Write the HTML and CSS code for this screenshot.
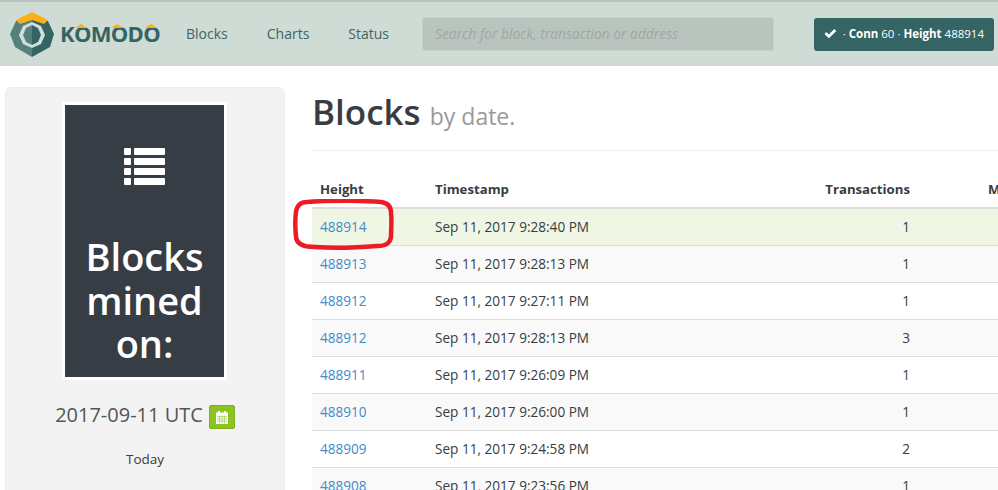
FILE: index.html

```html
<!DOCTYPE html>
<html lang="en">
<head>
  <meta charset="UTF-8">
  <title>Blocks by date - Komodo explorer</title>
  <meta name="viewport" content="width=device-width, initial-scale=1.0">
  <link rel="stylesheet" href="styles.css">
</head>
<body>
  <nav class="navbar">
    <a class="brand">
      <svg class="brand-mark" width="44" height="45" viewBox="0 0 44 45">
        <polygon points="6,9 0,22 5,35 22,45 22,8" fill="#56807e"/>
        <polygon points="38,9 44,22 40,35 22,45 22,8" fill="#346464"/>
        <polygon points="22,10 31,14 35,23 31,32 22,36 13,32 9,23 13,14" fill="#d3e0da"/>
        <polygon points="22,13 16,16 13,23 16,30 22,33" fill="#56807e"/>
        <polygon points="22,13 28,16 31,23 28,30 22,33" fill="#346464"/>
        <polygon points="6,8 22,0 38,8 34,12 22,8 10,12" fill="#fbb017"/>
      </svg>
      <span class="brand-word">
        <span class="brand-text">KOMODO</span>
        <svg class="brand-caps" width="100" height="6" viewBox="0 0 100 6">
          <polygon points="15,5 21,1 27,5" fill="#fbb017"/>
          <polygon points="51,5 57,1 63,5" fill="#fbb017"/>
          <polygon points="85,5 91,1 97,5" fill="#fbb017"/>
        </svg>
      </span>
    </a>
    <ul class="nav-links">
      <li>Blocks</li>
      <li>Charts</li>
      <li>Status</li>
    </ul>
    <input class="search" type="text" placeholder="Search for block, transaction or address">
    <div class="status">
      <svg width="13" height="11" viewBox="0 0 13 11"><path d="M0.500 6 L2.500 4 L5 6.500 L10.500 0.800 L12.700 3 L5 10.500 Z" fill="#fff"/></svg>
      <span>· <b>Conn</b> 60 · <b>Height</b> 488914</span>
    </div>
  </nav>

  <div class="page">
    <aside class="sidebar">
      <div class="poster">
        <svg class="poster-icon" width="41" height="37" viewBox="0 0 41 37" fill="#fff">
          <rect x="0" y="0" width="7" height="7" rx="1"/><rect x="10" y="0" width="31" height="7" rx="1"/>
          <rect x="0" y="10" width="7" height="7" rx="1"/><rect x="10" y="10" width="31" height="7" rx="1"/>
          <rect x="0" y="20" width="7" height="7" rx="1"/><rect x="10" y="20" width="31" height="7" rx="1"/>
          <rect x="0" y="30" width="7" height="7" rx="1"/><rect x="10" y="30" width="31" height="7" rx="1"/>
        </svg>
        <div class="poster-title">Blocks mined on:</div>
      </div>
      <div class="date-line">
        <span class="date-text">2017-09-11 UTC</span>
        <span class="date-btn">
          <svg width="12" height="13" viewBox="0 0 12 13">
            <rect x="0" y="1.500" width="12" height="11.500" fill="#fff"/>
            <rect x="2" y="0" width="2" height="3" fill="#fff"/><rect x="8" y="0" width="2" height="3" fill="#fff"/>
            <path d="M1 5.500h10M1 7.800h10M1 10.100h10M3.500 4.500v8M6 4.500v8M8.500 4.500v8" stroke="#a9cf6c" stroke-width="0.800"/>
          </svg>
        </span>
      </div>
      <div class="today">Today</div>
    </aside>

    <main class="content">
      <header class="page-header">
        <h1>Blocks <small>by date.</small></h1>
      </header>
      <div class="table-wrap">
        <svg class="annotation" width="102" height="52" viewBox="0 0 102 52">
          <path d="M14 3 C40 1 75 2 88 3 C96 4 98 9 98 14 C99 22 98 32 98 38 C97 45 92 47 84 47 C60 49 35 49 22 48 C10 48 3 45 3 37 C2 28 2 20 3 13 C4 6 8 3 14 3 Z" fill="none" stroke="#ed1c24" stroke-width="4.500"/>
        </svg>
        <table class="blocks">
          <thead>
            <tr><th class="col-height">Height</th><th class="col-time">Timestamp</th><th class="col-tx">Transactions</th><th class="col-mined">Mined by</th></tr>
          </thead>
          <tbody>
            <tr class="latest"><td><a>488914</a></td><td>Sep 11, 2017 9:28:40 PM</td><td class="num">1</td><td></td></tr>
            <tr><td><a>488913</a></td><td>Sep 11, 2017 9:28:13 PM</td><td class="num">1</td><td></td></tr>
            <tr><td><a>488912</a></td><td>Sep 11, 2017 9:27:11 PM</td><td class="num">1</td><td></td></tr>
            <tr><td><a>488912</a></td><td>Sep 11, 2017 9:28:13 PM</td><td class="num">3</td><td></td></tr>
            <tr><td><a>488911</a></td><td>Sep 11, 2017 9:26:09 PM</td><td class="num">1</td><td></td></tr>
            <tr><td><a>488910</a></td><td>Sep 11, 2017 9:26:00 PM</td><td class="num">1</td><td></td></tr>
            <tr><td><a>488909</a></td><td>Sep 11, 2017 9:24:58 PM</td><td class="num">2</td><td></td></tr>
            <tr><td><a>488908</a></td><td>Sep 11, 2017 9:23:56 PM</td><td class="num">1</td><td></td></tr>
          </tbody>
        </table>
      </div>
    </main>
  </div>
</body>
</html>
```

FILE: styles.css

```css
html, body {
  height: 100%;
  overflow: hidden;
}
body {
  margin: 0;
  font-family: "Open Sans", "Noto Sans", sans-serif;
  font-size: 14px;
  color: #373d42;
  background: #fff;
}

/* top bar */
.navbar {
  display: flex;
  align-items: center;
  box-sizing: border-box;
  height: 66px;
  padding-left: 10px;
  background: #cedcd5;
  border-top: 2px solid #b9c4be;
}
.brand {
  display: flex;
  align-items: center;
  flex: none;
  gap: 6px;
  width: 150px;
}
.brand-word {
  position: relative;
  display: block;
  margin-bottom: 2px;
}
.brand-text {
  font-size: 22px;
  font-weight: 700;
  letter-spacing: -0.7px;
  color: #346464;
}
.brand-caps {
  position: absolute;
  left: 0;
  top: 5px;
}
.nav-links {
  display: flex;
  flex: none;
  gap: 39px;
  list-style: none;
  margin: 0 0 2px 26px;
  padding: 0;
  color: #3e6464;
  font-size: 14px;
}
.search {
  box-sizing: border-box;
  flex: none;
  width: 352px;
  height: 34px;
  margin-left: 33px;
  padding: 0 12px 2px;
  background: #b9c4be;
  border: 1px solid #c5d2cb;
  border-radius: 3px;
  font-family: inherit;
  font-size: 13.800px;
  font-style: italic;
}
.search::placeholder {
  color: #9fa8a3;
}
.status {
  display: flex;
  align-items: center;
  flex: none;
  gap: 6px;
  box-sizing: border-box;
  width: 180px;
  height: 33px;
  margin-left: 40px;
  padding: 0 10px 1px;
  background: #346464;
  border-radius: 3px;
  color: #fff;
  font-size: 11.500px;
  white-space: nowrap;
}

/* page */
.page {
  display: flex;
  align-items: flex-start;
  padding: 21px 0 0 5px;
}
.sidebar {
  box-sizing: border-box;
  flex: none;
  width: 280px;
  height: 420px;
  padding-top: 14px;
  background: #f3f3f3;
  border: 1px solid #eee;
  border-radius: 6px;
  text-align: center;
}
.poster {
  box-sizing: border-box;
  width: 165px;
  height: 278px;
  margin-left: 56px;
  padding-top: 43px;
  background: #373d45;
  border: 3px solid #fff;
  color: #fff;
}
.poster-icon {
  display: block;
  margin: 0 auto;
}
.poster-title {
  margin-top: 50px;
  font-size: 38px;
  font-weight: 600;
  line-height: 43.500px;
}
.date-line {
  display: flex;
  justify-content: center;
  align-items: flex-start;
  gap: 6px;
  margin-top: 25px;
  font-size: 20px;
  color: #555;
}
.date-text {
  line-height: 19px;
}
.date-btn {
  display: flex;
  align-items: center;
  justify-content: center;
  box-sizing: border-box;
  width: 26px;
  height: 24px;
  background: #8cc322;
  border: 1px solid #7cb01c;
  border-radius: 2px;
}
.today {
  margin-top: 21px;
  font-size: 13.500px;
}

/* blocks table */
.content {
  flex: none;
  width: 800px;
  margin-left: 27px;
}
.page-header {
  height: 63px;
  border-bottom: 1px solid #eee;
}
h1 {
  margin: 0;
  font-size: 35px;
  font-weight: 600;
  line-height: 50px;
}
h1 small {
  font-size: 23px;
  font-weight: 400;
  color: #999;
}
.table-wrap {
  position: relative;
  margin-top: 20px;
}
.annotation {
  position: absolute;
  left: -19px;
  top: 28px;
}
.blocks {
  width: 800px;
  table-layout: fixed;
  border-collapse: collapse;
}
.blocks th {
  height: 36px;
  padding: 0 8px;
  font-size: 13.200px;
  font-weight: 700;
  text-align: left;
  border-bottom: 2px solid #ddd;
}
.blocks td {
  height: 34px;
  padding: 0 8px 2px;
  font-size: 13.600px;
  border-bottom: 1px solid #ddd;
}
.blocks .col-height { width: 99px; }
.blocks .col-time { width: 260px; }
.blocks .col-tx { width: 199px; text-align: right; }
.blocks .col-mined { padding-left: 70px; white-space: nowrap; }
.blocks .num { text-align: right; }
.blocks a { color: #428bca; }
.blocks tbody tr:nth-child(even) { background: #f9f9f9; }
.blocks tbody .latest { background: #eff6e3; }
```
